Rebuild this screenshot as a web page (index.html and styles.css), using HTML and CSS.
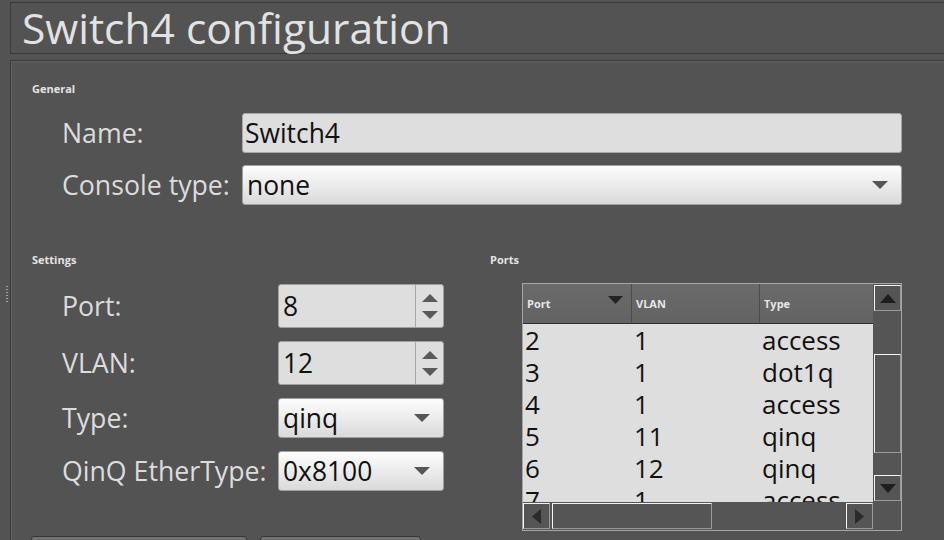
FILE: index.html
```html
<!DOCTYPE html>
<html>
<head>
<meta charset="utf-8">
<title>Switch4 configuration</title>
<link rel="stylesheet" href="styles.css">
</head>
<body>
<div class="window">
  <div class="gutter"><div class="grip"></div></div>
  <div class="content">
    <div class="title-box"><h1 class="title">Switch4 configuration</h1></div>
    <div class="main-box">
      <section class="general">
        <div class="group-label">General</div>
        <div class="form general-form">
          <label class="lbl">Name:</label>
          <div class="textbox">Switch4</div>
          <label class="lbl">Console type:</label>
          <div class="combo"><span>none</span><svg class="drop" viewBox="0 0 16 8"><polygon points="0,0 16,0 8,8"/></svg></div>
        </div>
      </section>
      <div class="lower">
        <section class="settings">
          <div class="group-label">Settings</div>
          <div class="form settings-form">
            <label class="lbl">Port:</label>
            <div class="spin"><span class="val">8</span><div class="spin-btns"><svg class="sarrow" viewBox="0 0 16 8"><polygon points="0,8 8,0 16,8"/></svg><svg class="sarrow" viewBox="0 0 16 8"><polygon points="0,0 16,0 8,8"/></svg></div></div>
            <label class="lbl">VLAN:</label>
            <div class="spin"><span class="val">12</span><div class="spin-btns"><svg class="sarrow" viewBox="0 0 16 8"><polygon points="0,8 8,0 16,8"/></svg><svg class="sarrow" viewBox="0 0 16 8"><polygon points="0,0 16,0 8,8"/></svg></div></div>
            <label class="lbl">Type:</label>
            <div class="combo"><span>qinq</span><svg class="drop" viewBox="0 0 16 8"><polygon points="0,0 16,0 8,8"/></svg></div>
            <label class="lbl">QinQ EtherType:</label>
            <div class="combo"><span>0x8100</span><svg class="drop" viewBox="0 0 16 8"><polygon points="0,0 16,0 8,8"/></svg></div>
          </div>
        </section>
        <section class="ports">
          <div class="group-label">Ports</div>
          <div class="table-frame">
            <div class="view">
              <div class="thead">
                <div class="th c1"><span>Port</span><svg class="sort" viewBox="0 0 15 8"><polygon points="0,0 15,0 7.5,8"/></svg></div>
                <div class="th c2"><span>VLAN</span></div>
                <div class="th c3"><span>Type</span></div>
              </div>
              <div class="tbody">
                <div class="tr"><div class="td c1">2</div><div class="td c2">1</div><div class="td c3">access</div></div>
                <div class="tr"><div class="td c1">3</div><div class="td c2">1</div><div class="td c3">dot1q</div></div>
                <div class="tr"><div class="td c1">4</div><div class="td c2">1</div><div class="td c3">access</div></div>
                <div class="tr"><div class="td c1">5</div><div class="td c2">11</div><div class="td c3">qinq</div></div>
                <div class="tr"><div class="td c1">6</div><div class="td c2">12</div><div class="td c3">qinq</div></div>
                <div class="tr"><div class="td c1">7</div><div class="td c2">1</div><div class="td c3">access</div></div>
              </div>
            </div>
            <div class="vscroll">
              <div class="sbtn vbtn"><svg class="varrow" viewBox="0 0 16 9"><polygon points="0,9 8,0 16,9"/></svg></div>
              <div class="vtrack"><div class="sbtn vthumb"></div></div>
              <div class="sbtn vbtn"><svg class="varrow" viewBox="0 0 16 9"><polygon points="0,0 16,0 8,9"/></svg></div>
            </div>
            <div class="hscroll">
              <div class="sbtn hbtn"><svg class="harrow" viewBox="0 0 9 15"><polygon points="9,0 9,15 0,7.5"/></svg></div>
              <div class="htrack"><div class="sbtn hthumb"></div></div>
              <div class="sbtn hbtn"><svg class="harrow" viewBox="0 0 9 15"><polygon points="0,0 9,7.5 0,15"/></svg></div>
            </div>
            <div class="corner"></div>
          </div>
        </section>
      </div>
      <div class="buttons"><div class="btn b1"></div><div class="btn b2"></div></div>
    </div>
  </div>
</div>
</body>
</html>
```
FILE: styles.css
```css
* { box-sizing: border-box; margin: 0; padding: 0; }
html, body { width: 944px; height: 540px; overflow: hidden; }
body {
  background: #535353;
  font-family: "Open Sans", "DejaVu Sans", sans-serif;
  color: #dedede;
}
.window { display: flex; height: 540px; }
.gutter { width: 10px; flex: none; padding: 286px 0 0 6px; }
.grip {
  width: 2px; height: 17px;
  background: repeating-linear-gradient(to bottom, #a4a4a4 0 1px, transparent 1px 3px);
}
.content { flex: 1; display: flex; flex-direction: column; padding-top: 2px; min-width: 0; }
.title-box {
  height: 52px; flex: none;
  border: 1px solid #3a3a3a; border-right: none;
  padding-left: 11px;
}
.title { font-weight: normal; font-size: 42.5px; line-height: 50px; color: #e2e2e2; white-space: nowrap; }
.main-box {
  margin-top: 6px; flex: 1;
  border-top: 1px solid #3a3a3a; border-left: 1px solid #3a3a3a;
  box-shadow: inset 1px 1px 0 #616161;
  padding: 21px 0 0 21px;
}
.group-label { font-weight: bold; font-size: 11px; line-height: 14px; height: 14px; color: #e4e4e4; }
.form { display: grid; align-items: center; }
.general-form { margin: 17px 0 0 29px; grid-template-columns: 181px 660px; grid-auto-rows: 40px; row-gap: 12px; }
.lbl { font-size: 26.7px; line-height: 38px; color: #dcdcdc; white-space: nowrap; padding-left: 1px; }
.textbox {
  height: 40px; border: 1px solid #a8a8a8; border-radius: 3px;
  background: #dedede; color: #111; font-size: 26.4px; line-height: 38px; padding-left: 2px;
}
.combo {
  height: 40px; border: 1px solid #a0a0a0; border-radius: 3px;
  background: linear-gradient(#fdfdfd, #dadada);
  color: #111; font-size: 26.4px; line-height: 38px;
  padding: 0 13px 0 4px;
  display: flex; align-items: center; justify-content: space-between;
}
.drop { width: 16px; height: 8px; fill: #555; }
.lower { display: flex; margin-top: 48px; }
.settings { width: 458px; flex: none; }
.settings-form { margin: 17px 0 0 29px; grid-template-columns: 217px 166px; grid-template-rows: 44px 44px 40px 40px; row-gap: 13px; }
.spin {
  height: 44px; display: flex;
  border: 1px solid #a0a0a0; border-radius: 3px;
  background: #dedede; color: #111; font-size: 26.4px;
}
.spin .val { flex: 1; line-height: 42px; padding-left: 4px; }
.spin-btns {
  width: 28px; border-left: 1px solid #a8a8a8;
  display: flex; flex-direction: column; align-items: center; justify-content: center; gap: 9px;
}
.sarrow { width: 16px; height: 8px; fill: #5a5a5a; }
.ports { flex: 1; }
.table-frame {
  margin: 16px 0 0 32px; width: 380px; height: 248px;
  border: 1px solid #a6a6a6;
  display: grid; grid-template-columns: 350px 28px; grid-template-rows: 218px 28px;
  background: #555;
}
.view { overflow: hidden; background: #dedede; }
.thead { display: flex; height: 40px; border-bottom: 1px solid #2f2f2f; background: linear-gradient(#6a6a6a, #636363); }
.th {
  font-weight: bold; font-size: 11px; line-height: 39px; color: #e6e6e6;
  padding: 0 8px 0 4px; border-right: 1px solid #4c4c4c;
  display: flex; justify-content: space-between;
}
.th.c3 { border-right: none; }
.sort { width: 15px; height: 8px; fill: #222; margin-top: 12px; }
.c1 { width: 109px; flex: none; }
.c2 { width: 128px; flex: none; }
.c3 { width: 113px; flex: none; }
.tr { display: flex; height: 32px; font-size: 26px; line-height: 32px; color: #111; }
.td { padding-left: 2px; white-space: nowrap; }
.sbtn {
  border-top: 1px solid #f4f4f4; border-left: 1px solid #f4f4f4;
  border-right: 1px solid #9a9a9a; border-bottom: 1px solid #9a9a9a;
  background: #555; display: flex; align-items: center; justify-content: center; flex: none;
}
.vscroll { display: flex; flex-direction: column; padding: 1px 0 0 1px; }
.vbtn { width: 27px; height: 26px; }
.vtrack { height: 164px; padding-top: 43px; }
.vthumb { width: 27px; height: 99px; }
.varrow { width: 16px; height: 9px; fill: #1e1e1e; }
.hscroll { display: flex; padding-top: 1px; }
.hbtn { width: 27px; height: 26px; }
.htrack { width: 296px; padding-left: 2px; }
.hthumb { width: 160px; height: 26px; }
.harrow { width: 9px; height: 15px; fill: #2a2a2a; }
.corner { background: #555; }
.buttons { display: flex; gap: 13px; margin: 5px 0 0 -1px; }
.btn {
  height: 30px; border: 1px solid #363636; border-radius: 3px;
  background: linear-gradient(#727272, #5c5c5c);
}
.b1 { width: 216px; }
.b2 { width: 161px; }
```
